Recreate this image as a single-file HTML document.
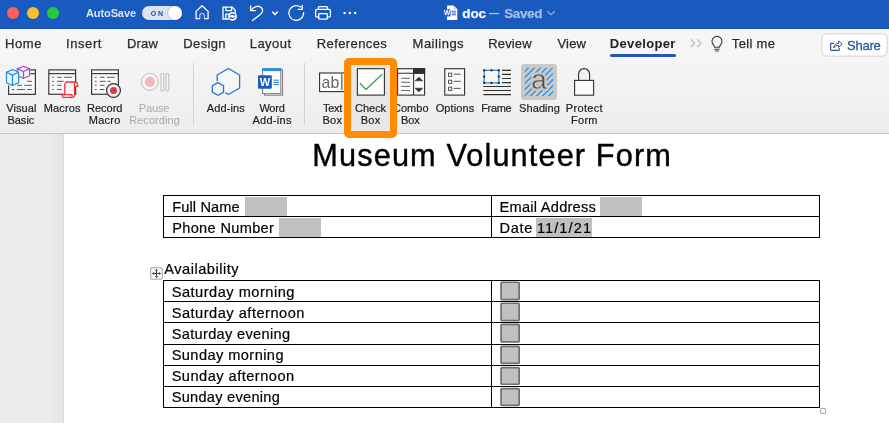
<!DOCTYPE html>
<html><head><meta charset="utf-8"><title>doc</title>
<style>
html,body{margin:0;padding:0;}
body{width:889px;height:423px;overflow:hidden;position:relative;background:#f3f3f3;font-family:"Liberation Sans",sans-serif;color:#262626;}
.abs,.t{position:absolute;white-space:nowrap;}
.t{color:#2a2a2a;}
#titlebar{position:absolute;left:0;top:0;width:889px;height:29px;background:#185abd;box-shadow:inset 0 -1px 0 #144fa8;}
#tabs{position:absolute;left:0;top:29px;width:889px;height:29px;background:#f5f5f5;border-top:1px solid #fbfbfb;box-sizing:border-box;}
#ribbon{position:absolute;left:0;top:58px;width:889px;height:75px;background:linear-gradient(#f4f4f4 0,#f2f2f2 50%,#ececec 100%);border-bottom:1px solid #c6c6c6;}
#work{position:absolute;left:0;top:134px;width:64px;height:289px;background:linear-gradient(90deg,#ececec 0,#ececec 48px,#e4e4e4 63px,#cfcfcf 64px);}
#page{position:absolute;left:64px;top:134px;width:825px;height:289px;background:#fff;}
.circle{position:absolute;width:12px;height:12px;border-radius:50%;top:7px;}
.hl{position:absolute;background:#000;}
.gray{position:absolute;background:#c0c0c0;}
.cb{position:absolute;left:500.2px;width:19.8px;height:19px;box-sizing:border-box;background:#c0c0c0;border:1.6px solid #727272;border-radius:1.5px;}
svg{position:absolute;left:0;top:0;will-change:transform;}
</style></head><body>
<div id="titlebar"></div>
<div id="tabs"></div>
<div id="ribbon"></div>
<div id="work"></div>
<div id="page"></div>

<!-- title bar widgets -->
<div class="circle" style="left:7px;background:#fe5f57"></div>
<div class="circle" style="left:27px;background:#febc2e"></div>
<div class="circle" style="left:47px;background:#28c840"></div>
<div class="abs" style="left:142px;top:6px;width:40px;height:14px;border-radius:7px;background:#dbe4f5;"></div>
<div class="abs" style="left:168px;top:6px;width:14px;height:14px;border-radius:7px;background:#fff;box-shadow:0 0 1.5px rgba(0,0,0,.5)"></div>

<!-- tab row widgets -->
<div class="abs" style="left:610px;top:54px;width:66px;height:2.5px;background:#2456b2;border-radius:1.5px"></div>
<svg width="889" height="70" viewBox="0 0 889 70"><rect x="822" y="33.9" width="65" height="22.2" rx="4" fill="#fff" stroke="#d4d4d4" stroke-width="1"/></svg>

<!-- ribbon separators -->
<div class="abs" style="left:193px;top:63px;width:1px;height:61.5px;background:#d2d2d2"></div>
<div class="abs" style="left:304px;top:63px;width:1px;height:61.5px;background:#d2d2d2"></div>
<!-- check box hover bg -->
<div class="abs" style="left:350px;top:64px;width:42px;height:68px;background:#e7e7e7"></div>
<!-- shading selected bg -->
<div class="abs" style="left:521px;top:64px;width:36px;height:36px;background:#c9c9c9;border-radius:3px"></div>

<!-- document static -->
<div class="abs" style="left:163px;top:195px;width:657px;height:43px;box-sizing:border-box;border:1px solid #000"></div>
<div class="hl" style="left:163px;top:216px;width:657px;height:1px"></div>
<div class="hl" style="left:491px;top:195px;width:1px;height:43px"></div>
<div class="gray" style="left:245px;top:196.5px;width:42px;height:19px"></div>
<div class="gray" style="left:279px;top:217.5px;width:42px;height:19px"></div>
<div class="gray" style="left:600.2px;top:196.5px;width:41.8px;height:19px"></div>
<div class="gray" style="left:536.4px;top:217.5px;width:55.4px;height:19px"></div>

<div class="abs" style="left:163px;top:280px;width:657px;height:128px;box-sizing:border-box;border:1px solid #000"></div>
<div class="hl" style="left:491px;top:280px;width:1px;height:128px"></div>
<div class="hl" style="left:163px;top:301px;width:657px;height:1px"></div>
<div class="hl" style="left:163px;top:322px;width:657px;height:1px"></div>
<div class="hl" style="left:163px;top:344px;width:657px;height:1px"></div>
<div class="hl" style="left:163px;top:365px;width:657px;height:1px"></div>
<div class="hl" style="left:163px;top:386px;width:657px;height:1px"></div>
<div class="abs" style="left:820px;top:408px;width:6px;height:6px;box-sizing:border-box;border:1px solid #a6a6a6;border-radius:1px;background:#fff"></div>

<div id="texts" style="position:absolute;left:0;top:0;width:889px;height:423px;will-change:transform">
<div class="t" id="ts_auto" style="left:86.00px;top:6px;font-size:11px;line-height:14px;letter-spacing:-0.102px;font-weight:bold;color:#d9e4f7">AutoSave</div>
<div class="t" id="ts_on" style="left:150.81px;top:9px;font-size:7px;line-height:9px;letter-spacing:1.832px;font-weight:bold;color:#2a4b8f">ON</div>
<div class="t" id="ts_doc" style="left:462.32px;top:5px;font-size:13.5px;line-height:18px;letter-spacing:-0.177px;font-weight:bold;color:#f3f6fc;-webkit-text-stroke:.25px #f3f6fc">doc</div>
<div class="t" id="ts_dash" style="left:489.00px;top:4px;font-size:13.5px;line-height:18px;letter-spacing:0.000px;font-weight:bold;color:#a4bbe6;transform:scaleX(.76);transform-origin:0 50%">—</div>
<div class="t" id="ts_saved" style="left:504.15px;top:5px;font-size:13.5px;line-height:18px;letter-spacing:-0.364px;font-weight:bold;color:#a4bbe6;-webkit-text-stroke:.25px #a4bbe6">Saved</div>
<div class="t" id="tb_home" style="left:4.99px;top:35px;font-size:13px;line-height:17px;letter-spacing:0.583px;color:#2a2a2a;-webkit-text-stroke:.25px #2a2a2a">Home</div>
<div class="t" id="tb_insert" style="left:65.97px;top:35px;font-size:13px;line-height:17px;letter-spacing:0.589px;color:#2a2a2a;-webkit-text-stroke:.25px #2a2a2a">Insert</div>
<div class="t" id="tb_draw" style="left:126.98px;top:35px;font-size:13px;line-height:17px;letter-spacing:0.167px;color:#2a2a2a;-webkit-text-stroke:.25px #2a2a2a">Draw</div>
<div class="t" id="tb_design" style="left:183.31px;top:35px;font-size:13px;line-height:17px;letter-spacing:0.366px;color:#2a2a2a;-webkit-text-stroke:.25px #2a2a2a">Design</div>
<div class="t" id="tb_layout" style="left:249.77px;top:35px;font-size:13px;line-height:17px;letter-spacing:0.442px;color:#2a2a2a;-webkit-text-stroke:.25px #2a2a2a">Layout</div>
<div class="t" id="tb_ref" style="left:316.75px;top:35px;font-size:13px;line-height:17px;letter-spacing:0.403px;color:#2a2a2a;-webkit-text-stroke:.25px #2a2a2a">References</div>
<div class="t" id="tb_mail" style="left:412.62px;top:35px;font-size:13px;line-height:17px;letter-spacing:0.471px;color:#2a2a2a;-webkit-text-stroke:.25px #2a2a2a">Mailings</div>
<div class="t" id="tb_review" style="left:488.26px;top:35px;font-size:13px;line-height:17px;letter-spacing:0.136px;color:#2a2a2a;-webkit-text-stroke:.25px #2a2a2a">Review</div>
<div class="t" id="tb_view" style="left:557.43px;top:35px;font-size:13px;line-height:17px;letter-spacing:0.208px;color:#2a2a2a;-webkit-text-stroke:.25px #2a2a2a">View</div>
<div class="t" id="tb_dev" style="left:609.79px;top:35px;font-size:13px;line-height:17px;letter-spacing:0.339px;font-weight:bold;color:#222">Developer</div>
<div class="t" id="tb_tell" style="left:731.84px;top:35px;font-size:13px;line-height:17px;letter-spacing:0.314px;color:#2a2a2a;-webkit-text-stroke:.25px #2a2a2a">Tell me</div>
<div class="t" id="tb_share" style="left:847.12px;top:37px;font-size:13px;line-height:17px;letter-spacing:-0.239px;color:#2a5699;-webkit-text-stroke:.3px #2a5699">Share</div>
<div class="t" id="rl_visual" style="left:6.24px;top:101px;font-size:11px;line-height:14px;letter-spacing:0.068px;color:#222;-webkit-text-stroke:.2px #222">Visual</div>
<div class="t" id="rl_basic" style="left:7.39px;top:113px;font-size:11px;line-height:14px;letter-spacing:0.016px;color:#222;-webkit-text-stroke:.2px #222">Basic</div>
<div class="t" id="rl_macros" style="left:43.81px;top:101px;font-size:11px;line-height:14px;letter-spacing:0.134px;color:#222;-webkit-text-stroke:.2px #222">Macros</div>
<div class="t" id="rl_record" style="left:87.09px;top:101px;font-size:11px;line-height:14px;letter-spacing:-0.011px;color:#222;-webkit-text-stroke:.2px #222">Record</div>
<div class="t" id="rl_macro" style="left:88.81px;top:113px;font-size:11px;line-height:14px;letter-spacing:0.230px;color:#222;-webkit-text-stroke:.2px #222">Macro</div>
<div class="t" id="rl_pause" style="left:138.78px;top:101px;font-size:11px;line-height:14px;letter-spacing:-0.119px;color:#a9a9a9">Pause</div>
<div class="t" id="rl_recording" style="left:129.17px;top:113px;font-size:11px;line-height:14px;letter-spacing:0.065px;color:#a9a9a9">Recording</div>
<div class="t" id="rl_addins" style="left:206.83px;top:101px;font-size:11px;line-height:14px;letter-spacing:0.120px;color:#222;-webkit-text-stroke:.2px #222">Add-ins</div>
<div class="t" id="rl_word" style="left:259.38px;top:101px;font-size:11px;line-height:14px;letter-spacing:-0.202px;color:#222;-webkit-text-stroke:.2px #222">Word</div>
<div class="t" id="rl_addins2" style="left:252.40px;top:113px;font-size:11px;line-height:14px;letter-spacing:0.298px;color:#222;-webkit-text-stroke:.2px #222">Add-ins</div>
<div class="t" id="rl_text" style="left:322.91px;top:101px;font-size:11px;line-height:14px;letter-spacing:-0.262px;color:#222;-webkit-text-stroke:.2px #222">Text</div>
<div class="t" id="rl_box1" style="left:322.50px;top:113px;font-size:11px;line-height:14px;letter-spacing:0.232px;color:#222;-webkit-text-stroke:.2px #222">Box</div>
<div class="t" id="rl_check" style="left:355.00px;top:101px;font-size:11px;line-height:14px;letter-spacing:-0.014px;color:#222;-webkit-text-stroke:.2px #222">Check</div>
<div class="t" id="rl_box2" style="left:360.82px;top:113px;font-size:11px;line-height:14px;letter-spacing:0.184px;color:#222;-webkit-text-stroke:.2px #222">Box</div>
<div class="t" id="rl_combo" style="left:393.07px;top:101px;font-size:11px;line-height:14px;letter-spacing:-0.005px;color:#222;-webkit-text-stroke:.2px #222">Combo</div>
<div class="t" id="rl_box3" style="left:401.06px;top:113px;font-size:11px;line-height:14px;letter-spacing:-0.068px;color:#222;-webkit-text-stroke:.2px #222">Box</div>
<div class="t" id="rl_options" style="left:435.63px;top:101px;font-size:11px;line-height:14px;letter-spacing:0.102px;color:#222;-webkit-text-stroke:.2px #222">Options</div>
<div class="t" id="rl_frame" style="left:481.21px;top:101px;font-size:11px;line-height:14px;letter-spacing:-0.317px;color:#222;-webkit-text-stroke:.2px #222">Frame</div>
<div class="t" id="rl_shading" style="left:519.11px;top:101px;font-size:11px;line-height:14px;letter-spacing:0.070px;color:#222;-webkit-text-stroke:.2px #222">Shading</div>
<div class="t" id="rl_protect" style="left:565.82px;top:101px;font-size:11px;line-height:14px;letter-spacing:0.333px;color:#222;-webkit-text-stroke:.2px #222">Protect</div>
<div class="t" id="rl_form" style="left:571.06px;top:113px;font-size:11px;line-height:14px;letter-spacing:0.274px;color:#222;-webkit-text-stroke:.2px #222">Form</div>
<div class="t" id="d_title" style="left:312.36px;top:136px;font-size:30.7px;line-height:40px;letter-spacing:1.122px;color:#000;-webkit-text-stroke:.4px #000">Museum Volunteer Form</div>
<div class="t" id="d_fullname" style="left:172.19px;top:198px;font-size:14.6px;line-height:19px;letter-spacing:0.124px;color:#000;-webkit-text-stroke:.2px #000">Full Name</div>
<div class="t" id="d_phone" style="left:172.19px;top:219px;font-size:14.6px;line-height:19px;letter-spacing:0.323px;color:#000;-webkit-text-stroke:.2px #000">Phone Number</div>
<div class="t" id="d_email" style="left:499.57px;top:198px;font-size:14.6px;line-height:19px;letter-spacing:0.247px;color:#000;-webkit-text-stroke:.2px #000">Email Address</div>
<div class="t" id="d_date" style="left:499.57px;top:219px;font-size:14.6px;line-height:19px;letter-spacing:0.621px;color:#000;-webkit-text-stroke:.2px #000">Date</div>
<div class="t" id="d_dateval" style="left:536.88px;top:219px;font-size:14.6px;line-height:19px;letter-spacing:1.092px;color:#000;-webkit-text-stroke:.2px #000">11/1/21</div>
<div class="t" id="d_avail" style="left:164.26px;top:260px;font-size:14.6px;line-height:19px;letter-spacing:0.506px;color:#000;-webkit-text-stroke:.2px #000">Availability</div>
<div class="t" id="d_r1" style="left:171.67px;top:283px;font-size:14.6px;line-height:19px;letter-spacing:0.508px;color:#000;-webkit-text-stroke:.2px #000">Saturday morning</div>
<div class="t" id="d_r2" style="left:171.67px;top:304px;font-size:14.6px;line-height:19px;letter-spacing:0.509px;color:#000;-webkit-text-stroke:.2px #000">Saturday afternoon</div>
<div class="t" id="d_r3" style="left:171.67px;top:325px;font-size:14.6px;line-height:19px;letter-spacing:0.322px;color:#000;-webkit-text-stroke:.2px #000">Saturday evening</div>
<div class="t" id="d_r4" style="left:171.67px;top:346px;font-size:14.6px;line-height:19px;letter-spacing:0.429px;color:#000;-webkit-text-stroke:.2px #000">Sunday morning</div>
<div class="t" id="d_r5" style="left:171.67px;top:367px;font-size:14.6px;line-height:19px;letter-spacing:0.484px;color:#000;-webkit-text-stroke:.2px #000">Sunday afternoon</div>
<div class="t" id="d_r6" style="left:171.67px;top:388px;font-size:14.6px;line-height:19px;letter-spacing:0.265px;color:#000;-webkit-text-stroke:.2px #000">Sunday evening</div>
</div>

<svg width="889" height="423" viewBox="0 0 889 423" fill="none" stroke-linecap="round" stroke-linejoin="round">
<!-- ===== title bar icons (white) ===== -->
<g stroke="#fff" stroke-width="1.3">
  <!-- home -->
  <path d="M199.6 18.7 H196.1 V11.4 L202.1 5.7 L208.1 11.4 V18.7 H204.6"/>
  <path d="M199.8 18.2 V15.6 a2.3 2.3 0 0 1 4.6 0 V18.2" stroke="#a9bfe9" stroke-width="1.3" stroke-linecap="butt"/>
  <!-- save -->
  <path d="M223 7.2 H232.2 L235.2 10.2 V14 M223 7.2 V19 H228.4"/>
  <path d="M225.8 7.4 V10.6 H231.6 V7.4"/>
  <path d="M225.8 19 V14.2 H228.6"/>
  <!-- undo -->
  <path d="M250.6 5.8 V10.6 H255.6"/>
  <path d="M250.9 10.4 C253.5 6.6 258.3 4.9 261.2 7.6 C263.6 9.9 262.7 12.4 260.3 14.4 L252.4 20.6"/>
  <path d="M272.6 12 L275 14.6 L277.4 12" stroke-width="1.5"/>
  <!-- redo -->
  <path d="M300.6 7 A7.4 7.4 0 1 0 303.6 12.6" />
  <path d="M302.2 5.4 V9.4 H298.2" stroke-width="1.4"/>
  <!-- print -->
  <path d="M318.4 9.4 V7.6 a1 1 0 0 1 1 -1 H326.6 a1 1 0 0 1 1 1 V9.4"/>
  <path d="M318.6 17.2 H317 a1.4 1.4 0 0 1 -1.4 -1.4 V11 a1.6 1.6 0 0 1 1.6 -1.6 H328.8 a1.6 1.6 0 0 1 1.6 1.6 V15.8 a1.4 1.4 0 0 1 -1.4 1.4 H327.4"/>
  <rect x="318.7" y="13.6" width="8.6" height="5.6" rx="0.8"/>
  <!-- saved chevron -->
  <path d="M547.6 11.6 L551 14.6 L554.4 11.6" stroke="#9fb8e6" stroke-width="1.2"/>
</g>
<!-- save sync badge -->
<circle cx="232.5" cy="16.3" r="4.4" fill="#fff" stroke="none"/>
<path d="M230.3 15.3 Q232.3 13.3 234.5 14.9 M234.7 17.3 Q232.7 19.3 230.5 17.7" stroke="#185abd" stroke-width="1.1" stroke-linecap="butt"/><path d="M235.2 13.6 V15.6 H233.2 Z M229.8 19 V17 H231.8 Z" fill="#185abd" stroke="none"/>
<!-- ellipsis -->
<g fill="#fff" stroke="none"><circle cx="344.6" cy="13" r="1.25"/><circle cx="349.9" cy="13" r="1.25"/><circle cx="355.2" cy="13" r="1.25"/></g>
<!-- doc icon -->
<path d="M447 6 a0.6 0.6 0 0 1 .6 -.6 H453.6 L457.3 9.2 V19.4 a.6 .6 0 0 1 -.6 .6 H447.6 a.6 .6 0 0 1 -.6 -.6 Z" fill="#fff" stroke="none"/>
<path d="M453.6 5.4 V9.2 H457.3 Z" fill="#c9d6ef" stroke="none"/>
<rect x="443.4" y="9.2" width="7.2" height="7.3" rx="0.8" fill="#2b66c9" stroke="none"/>
<g stroke="#2b66c9" stroke-width="1"><path d="M452 11.2 H455.6 M452 13 H455.6 M452 14.8 H455.6"/></g>
<text x="447" y="15.3" font-family="Liberation Sans, sans-serif" font-weight="bold" font-size="6.5" text-anchor="middle" fill="#fff" stroke="none">W</text>

<!-- ===== tab row icons ===== -->
<g stroke="#c4c4c4" stroke-width="1.5"><path d="M691 39.8 L694.6 43.2 L691 46.6 M697.4 39.8 L701 43.2 L697.4 46.6"/></g>
<g stroke="#3a3a3a" stroke-width="1.1">
  <path d="M714.6 47.2 C714.6 45.4 712 44.4 712 41.4 a5 5 0 0 1 10 0 C722 44.4 719.4 45.4 719.4 47.2 Z"/>
  <path d="M714.8 49.2 H719.2 M715.6 51 H718.4"/>
</g>
<g stroke="#2a5699" stroke-width="1.2">
  <path d="M833.6 43.4 H831.4 a.8 .8 0 0 0 -.8 .8 V49.6 a.8 .8 0 0 0 .8 .8 H838.6 a.8 .8 0 0 0 .8 -.8 V48.4"/>
  <path d="M833.8 47.6 C834.2 44.6 836 43.4 838.6 43.4 V41 L842 44.2 L838.6 47.4 V45.4 C836.6 45.4 835 45.8 833.8 47.6 Z" stroke-width="1"/>
</g>

<!-- ===== ribbon icons ===== -->
<g stroke="#3b3b3b" stroke-width="1.2" stroke-linecap="butt" stroke-linejoin="miter">
  <!-- Visual Basic window -->
  <rect x="9.2" y="70.5" width="25.6" height="23.2" fill="#f8f8f8" stroke="none"/>
  <path d="M30.4 69.9 H35.4 V94.3 H8.6 V85.6"/>
  <path d="M30.4 73.6 H35.4"/>
  <!-- Macros window -->
  <rect x="48.8" y="69.9" width="26.8" height="24.4" fill="#f8f8f8"/>
  <path d="M48.8 73.6 H75.6"/>
  <!-- Record Macro window -->
  <rect x="91.6" y="69.9" width="26.8" height="24.4" fill="#f8f8f8"/>
  <path d="M91.6 73.6 H118.4"/>
</g>
<g stroke="#5a5a5a" stroke-width="1" stroke-linecap="butt">
  <!-- VB dashes -->
  <path d="M27.1 81.3 H31.9 M17 85.3 H21.8 M24.3 85.3 H31.9 M11.9 89.5 H14.4 M17 89.5 H25 M27.1 89.5 H31.9"/>
  <!-- Macros dashes -->
  <path d="M52.1 77.3 H53.8 M57.1 77.3 H61.7 M64.1 77.3 H71.8"/>
  <path d="M52.1 81.3 H53.8 M57.1 81.3 H63.5"/>
  <path d="M52.1 85.3 H53.8 M57.1 85.3 H61.7"/>
  <path d="M52.1 89.5 H53.8 M57.1 89.5 H61.7"/>
  <!-- Record dashes -->
  <path d="M94.9 77.3 H96.6 M99.9 77.3 H104.5 M106.9 77.3 H114.6"/>
  <path d="M94.9 81.3 H96.6 M99.9 81.3 H105.6 M107.6 81.3 H110.6"/>
  <path d="M94.9 85.3 H96.6 M99.9 85.3 H104.5"/>
  <path d="M94.9 89.5 H96.6 M99.9 89.5 H104.5"/>
</g>
<!-- VB cubes -->
<g stroke-width="1.2" stroke-linejoin="round">
  <path d="M23.5 66.3 L29.7 68.9 V75.7 L23.5 78.3 L17.3 75.7 V68.9 Z" fill="#f3f3f3" stroke="#a54cc6"/>
  <path d="M17.3 68.9 L23.5 71.5 L29.7 68.9 M23.5 71.5 V78.3" stroke="#a54cc6"/>
  <path d="M12.5 69.5 L18.6 72.3 V82.7 L12.5 85.5 L6.5 82.7 V72.3 Z" fill="#f3f3f3" stroke="#1f8ae2"/>
  <path d="M6.5 72.3 L12.5 75.1 L18.6 72.3 M12.5 75.1 V85.5" stroke="#1f8ae2"/>
</g>
<!-- Macros scroll -->
<g stroke="#e9383c" stroke-width="1.3" stroke-linejoin="round">
  <path d="M64.8 94.6 V84.4 a2.4 2.4 0 0 1 2.4 -2.4 H75.4 a2.2 2.2 0 0 1 2.2 2.2 V86.4 H74.6 V95 a2.4 2.4 0 0 1 -2.4 2.4 H63.6 a1.3 1.3 0 0 1 -1.3 -1.3 V94.6 Z" fill="#f3f3f3"/>
  <path d="M74.6 86.4 V84.2 a1.5 1.5 0 0 1 1.2 -2.1 M62.4 94.6 H72 V96 "/>
</g>
<!-- Record circle -->
<circle cx="113.5" cy="90.5" r="6.9" fill="#f3f3f3" stroke="#2e2e2e" stroke-width="1.2"/>
<circle cx="113.5" cy="90.5" r="3.5" fill="#e9363a" stroke="none"/>
<!-- Pause recording -->
<circle cx="149.9" cy="81.8" r="8.5" fill="#f6f6f6" stroke="#bdbdbd" stroke-width="1"/>
<circle cx="149.9" cy="81.8" r="5.1" fill="#f0b9ba" stroke="none"/>
<rect x="161.4" y="73.6" width="2.4" height="17.2" fill="#f6f6f6" stroke="#bdbdbd" stroke-width="1"/>
<rect x="166.4" y="73.6" width="2.4" height="17.2" fill="#f6f6f6" stroke="#bdbdbd" stroke-width="1"/>
<!-- Add-ins -->
<g stroke="#1f77cf" stroke-width="1.3" stroke-linejoin="round">
  <path d="M228.4 68.5 L239.6 75 V88 L228.4 94.5 L217.2 88 V75 Z" fill="#f6f6f6"/>
  <path d="M217.9 82.6 L223.5 85.8 V92.1 L217.9 95.3 L212.3 92.1 V85.8 Z" fill="#f6f6f6" stroke="#f3f3f3" stroke-width="3.4"/>
  <path d="M217.9 82.6 L223.5 85.8 V92.1 L217.9 95.3 L212.3 92.1 V85.8 Z" fill="#f6f6f6"/>
</g>
<!-- Word Add-ins -->
<g stroke-linecap="butt" stroke-linejoin="miter">
  <rect x="264.6" y="70" width="18" height="25.2" fill="#fafafa" stroke="#777" stroke-width="1"/>
  <rect x="262.6" y="68.6" width="18.2" height="25" fill="#fbfbfb" stroke="#777" stroke-width="1"/>
  <rect x="262.1" y="68.1" width="19.2" height="3" fill="#2f8fe8" stroke="none"/>
  <rect x="258" y="75.2" width="13.8" height="13.5" rx="1" fill="#1c5bbf" stroke="none"/>
  <path d="M273.4 80.2 H279 M273.4 82.4 H279 M273.4 84.6 H279" stroke="#2f7fdd" stroke-width="1"/>
</g>
<text x="264.9" y="86.1" font-family="Liberation Sans, sans-serif" font-weight="bold" font-size="11" text-anchor="middle" fill="#fff" stroke="none">W</text>
<!-- Text Box -->
<rect x="319.6" y="73" width="28" height="18.6" fill="#fff" stroke="#2f2f2f" stroke-width="1.1" stroke-linejoin="miter"/>
<text x="321.6" y="87.9" font-family="Liberation Sans, sans-serif" font-size="16.4" fill="#666" stroke="none" textLength="17.6" lengthAdjust="spacingAndGlyphs">ab</text>
<path d="M341.9 74 V90" stroke="#333" stroke-width="1" stroke-linecap="butt"/>
<!-- Check Box -->
<rect x="357.4" y="68.7" width="27" height="26.4" fill="#fff" stroke="#2f2f2f" stroke-width="1.1" stroke-linejoin="miter"/>
<path d="M360.2 83.6 L366 89.4 L381.8 74.6" stroke="#35a853" stroke-width="1.4" stroke-linecap="round"/>
<!-- Combo Box -->
<g stroke="#2f2f2f" stroke-width="1.1" stroke-linecap="butt" stroke-linejoin="miter">
  <rect x="397.6" y="68.7" width="27" height="26.4" fill="#fafafa"/>
  <path d="M397.6 73.3 H424.6 M413.6 68.7 V95.1"/>
  <rect x="413.6" y="68.7" width="11" height="4.6" fill="#2f2f2f"/>
  <path d="M418.9 77.2 L422.7 80.8 H415.1 Z M418.9 91.8 L422.7 88.2 H415.1 Z" fill="#2f2f2f" stroke-width=".6" stroke-linejoin="round"/>
</g>
<path d="M401.2 78.3 H410 M401.2 82.3 H410 M401.2 86.4 H410 M401.2 90.5 H410" stroke="#666" stroke-width="1" stroke-linecap="butt"/>
<!-- Options -->
<g stroke-linecap="butt" stroke-linejoin="miter">
  <rect x="444.8" y="68.7" width="19.8" height="26.4" fill="#fafafa" stroke="#2f2f2f" stroke-width="1.1"/>
  <g stroke="#555" stroke-width="1">
    <rect x="448.5" y="73.2" width="3.2" height="3.2"/><rect x="448.5" y="80.2" width="3.2" height="3.2"/><rect x="448.5" y="87.2" width="3.2" height="3.2"/>
    <path d="M453.8 74.2 H460.7 M453.8 81.3 H460.7 M453.8 88.4 H460.7"/>
  </g>
</g>
<!-- Frame -->
<g stroke-linecap="butt" stroke-linejoin="miter">
  <path d="M502.1 70.4 H511 M502.1 74.4 H511 M502.1 78.5 H511 M502.1 82.6 H511 M483.3 86.5 H511 M483.3 90.5 H511 M483.3 94.6 H511" stroke="#2f2f2f" stroke-width="1.1"/>
  <rect x="484.2" y="70.3" width="14.6" height="12.6" fill="#f8f8f8" stroke="#1f86e0" stroke-width="1.2"/>
  <g fill="#222" stroke="none">
    <rect x="483.2" y="69.3" width="2" height="2"/><rect x="490.5" y="69.3" width="2" height="2"/><rect x="497.8" y="69.3" width="2" height="2"/>
    <rect x="483.2" y="75.6" width="2" height="2"/><rect x="497.8" y="75.6" width="2" height="2"/>
    <rect x="483.2" y="81.9" width="2" height="2"/><rect x="490.5" y="81.9" width="2" height="2"/><rect x="497.8" y="81.9" width="2" height="2"/>
  </g>
</g>
<!-- Shading hatch -->
<clipPath id="hc"><rect x="524.8" y="67.7" width="28.4" height="28.4"/></clipPath>
<g clip-path="url(#hc)" stroke="#1e8ee6" stroke-width="1.2" stroke-linecap="butt">
  <path d="M515 81.3 L539.3 57 M515 87.3 L545.3 57 M515 93.4 L551.4 57 M515 99.4 L557.4 57 M515 105.5 L563.5 57 M515 111.5 L569.5 57 M515 117.6 L575.6 57 M515 123.6 L581.6 57 M515 129.7 L587.7 57"/>
</g>
<text x="539" y="88.9" font-family="Liberation Sans, sans-serif" font-size="28.5" text-anchor="middle" fill="#c9c9c9" stroke="#c9c9c9" stroke-width="3.6">a</text>
<text x="539" y="88.9" font-family="Liberation Sans, sans-serif" font-size="28.5" text-anchor="middle" fill="#505050" stroke="#c9c9c9" stroke-width=".5">a</text>
<!-- Protect Form lock -->
<g stroke="#2f2f2f" stroke-width="1.1" stroke-linecap="butt" stroke-linejoin="miter">
  <path d="M578.6 80.4 V74.2 a5.5 5.6 0 0 1 11 0 V80.4"/>
  <rect x="574.6" y="80.4" width="19" height="14.8" fill="#fafafa"/>
</g>

<!-- ===== document anchor icon ===== -->
<rect x="150.7" y="267.8" width="11.6" height="11.4" rx="1" fill="#fbfbfb" stroke="#a3a3a3" stroke-width="1"/>
<path d="M156.5 270 V277 M153 273.5 H160" stroke="#444" stroke-width="1" stroke-linecap="butt"/>
<path d="M156.5 268.8 L158 271.1 H155 Z M156.5 278.2 L158 275.9 H155 Z M151.8 273.5 L154.1 272 V275 Z M161.2 273.5 L158.9 272 V275 Z" fill="#444" stroke="none"/>
<!-- ===== form check boxes ===== -->
<g fill="#c0c0c0" stroke="#6f6f6f" stroke-width="1.7" stroke-linejoin="round">
<rect x="501.05" y="282.25" width="18.10" height="17.40" rx="0.8"/>
<rect x="501.05" y="303.25" width="18.10" height="17.40" rx="0.8"/>
<rect x="501.05" y="324.35" width="18.10" height="17.60" rx="0.8"/>
<rect x="501.05" y="346.45" width="18.10" height="16.90" rx="0.8"/>
<rect x="501.05" y="367.65" width="18.10" height="16.60" rx="0.8"/>
<rect x="501.05" y="388.65" width="18.10" height="16.70" rx="0.8"/>
</g>

</svg>

<!-- orange highlight -->
<div class="abs" style="left:344.2px;top:58px;width:53.2px;height:80.4px;box-sizing:border-box;border:7px solid #ff8b00;border-radius:5px;"></div>
</body></html>
